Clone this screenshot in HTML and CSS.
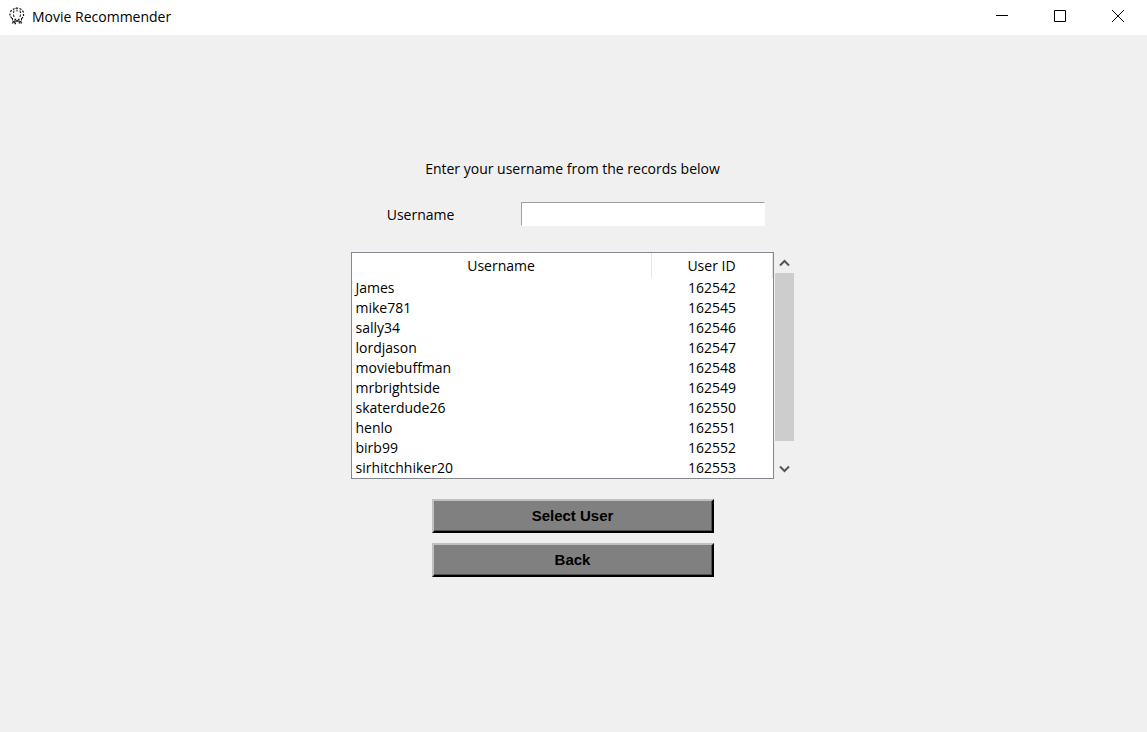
FILE: index.html
```
<!DOCTYPE html>
<html lang="en">
<head>
<meta charset="utf-8">
<title>Movie Recommender</title>
<link rel="stylesheet" href="styles.css">
</head>
<body>
<header class="titlebar">
  <svg class="app-icon" width="16" height="18" viewBox="0 0 16 18" fill="none" stroke="#15151f" aria-hidden="true">
    <path stroke-width="1.200" d="M4 2.500L5.500 1.500M6.500 1.500L8 1L9 1.500M10.500 1.500L12.500 2.500M13.500 3.500L14.500 5.500M14.500 7V9M14 10L12.500 12M2.500 3L1.500 5M1 6.500V8.500M1.500 9.500L3 11.500"/>
    <path d="M5 3.500L4.500 6M4.500 7.500L5 10M8 2.500V4.500M11 3.500L11.500 6M11.500 7.500L11 10M3.500 11V13.500M12.500 11V13.500"/>
    <path stroke-width="1.300" d="M5.500 12.500H7M9 12.500H10.500M4.500 14L3.500 16.500M6 13.500L5.500 16M7 14.500L8 13.500L9 14.500M10 13.500L10.500 16.500M11.500 14L12.500 16.500M5.500 16.500H7"/>
  </svg>
  <h1 class="title">Movie Recommender</h1>
  <div class="window-controls">
    <button class="window-button" type="button" aria-label="Minimize"><svg width="12" height="12" viewBox="0 0 12 12"><path d="M0 5.500H12"/></svg></button>
    <button class="window-button" type="button" aria-label="Maximize"><svg width="12" height="12" viewBox="0 0 12 12"><path d="M.5 .5H11.500V11.500H.5Z"/></svg></button>
    <button class="window-button" type="button" aria-label="Close"><svg width="12" height="12" viewBox="0 0 12 12"><path d="M0 0L12 12M12 0L0 12"/></svg></button>
  </div>
</header>
<main class="content">
  <form class="panel">
    <p class="prompt">Enter your username from the records below</p>
    <div class="field">
      <label class="field-label" for="username">Username</label>
      <input class="field-input" id="username" type="text">
    </div>
    <div class="records">
      <table class="table">
        <thead><tr><th class="name">Username</th><th class="id">User ID</th></tr></thead>
        <tbody>
          <tr><td>James</td><td class="id">162542</td></tr>
          <tr><td>mike781</td><td class="id">162545</td></tr>
          <tr><td>sally34</td><td class="id">162546</td></tr>
          <tr><td>lordjason</td><td class="id">162547</td></tr>
          <tr><td>moviebuffman</td><td class="id">162548</td></tr>
          <tr><td>mrbrightside</td><td class="id">162549</td></tr>
          <tr><td>skaterdude26</td><td class="id">162550</td></tr>
          <tr><td>henlo</td><td class="id">162551</td></tr>
          <tr><td>birb99</td><td class="id">162552</td></tr>
          <tr><td>sirhitchhiker20</td><td class="id">162553</td></tr>
        </tbody>
      </table>
      <div class="scrollbar">
        <button class="scroll-button" type="button" aria-label="Scroll up"><svg width="11" height="8" viewBox="0 0 11 8"><path d="M1 6.500L5.500 2L10 6.500"/></svg></button>
        <div class="track"><div class="thumb"></div></div>
        <button class="scroll-button" type="button" aria-label="Scroll down"><svg width="11" height="8" viewBox="0 0 11 8"><path d="M1 1.500L5.500 6L10 1.500"/></svg></button>
      </div>
    </div>
    <div class="actions">
      <button class="action" type="button">Select User</button>
      <button class="action" type="button">Back</button>
    </div>
  </form>
</main>
</body>
</html>
```
FILE: styles.css
```
* {
  box-sizing: border-box;
}

body {
  margin: 0;
  min-height: 100vh;
  display: flex;
  flex-direction: column;
  background: #f0f0f0;
  color: #000;
  font: 14px/20px "Open Sans", "Noto Sans", sans-serif;
}

.titlebar {
  display: flex;
  align-items: center;
  height: 35px;
  padding-left: 9px;
  background: #fff;
}

.app-icon {
  margin-bottom: 4px;
}

.title {
  margin: 0 0 2px 7px;
  font-size: 14px;
  font-weight: 400;
}

.window-controls {
  display: flex;
  align-self: stretch;
  margin-left: auto;
}

.window-button {
  display: flex;
  align-items: center;
  justify-content: center;
  width: 58px;
  padding: 0 0 3px;
  border: 0;
  background: none;
}

.window-button path {
  fill: none;
  stroke: #000;
}

.content {
  flex: 1;
  display: flex;
  align-items: center;
  justify-content: center;
  padding: 0 2px 32px 0;
}

.panel {
  display: flex;
  flex-direction: column;
  width: 444px;
}

.prompt {
  margin: 0;
  padding-bottom: 22px;
  line-height: 22px;
  text-align: center;
}

.field {
  display: grid;
  grid-template-columns: 140px 1fr;
  align-items: center;
  justify-items: center;
  padding-bottom: 26px;
}

.field-label {
  line-height: 22px;
  padding-top: 2px;
}

.field-input {
  width: 244px;
  height: 24px;
  padding: 0 4px;
  border: 1px solid;
  border-color: #a0a0a0 #fff #fff #a0a0a0;
  background: #fff;
  font: inherit;
}

.records {
  display: flex;
  gap: 1px;
}

.table {
  flex: 1;
  table-layout: fixed;
  border: 1px solid #828790;
  border-spacing: 0;
  background: #fff;
}

.table th {
  height: 25px;
  padding: 0;
  border-right: 1px solid #e5e5e5;
  font-weight: 400;
}

.table td {
  height: 20px;
  padding: 0 4px;
}

.table .name {
  width: 300px;
}

.table .id {
  text-align: center;
}

.scrollbar {
  display: flex;
  flex-direction: column;
  width: 20px;
}

.scroll-button {
  display: flex;
  align-items: center;
  justify-content: center;
  height: 21px;
  padding: 0;
  border: 0;
  background: none;
}

.scroll-button path {
  fill: none;
  stroke: #555;
  stroke-width: 2;
}

.track {
  flex: 1;
}

.thumb {
  width: 19px;
  height: 168px;
  background: #cdcdcd;
}

.actions {
  display: flex;
  flex-direction: column;
  align-items: center;
  gap: 10px;
  padding-top: 20px;
}

.action {
  width: 282px;
  height: 34px;
  padding: 0;
  border: 2px solid;
  border-color: #c0c0c0 #000 #000 #c0c0c0;
  background: #808080;
  box-shadow: inset -1px -1px #505050;
  color: #000;
  font: bold 15px/20px "Liberation Sans", Arial, sans-serif;
}
```
